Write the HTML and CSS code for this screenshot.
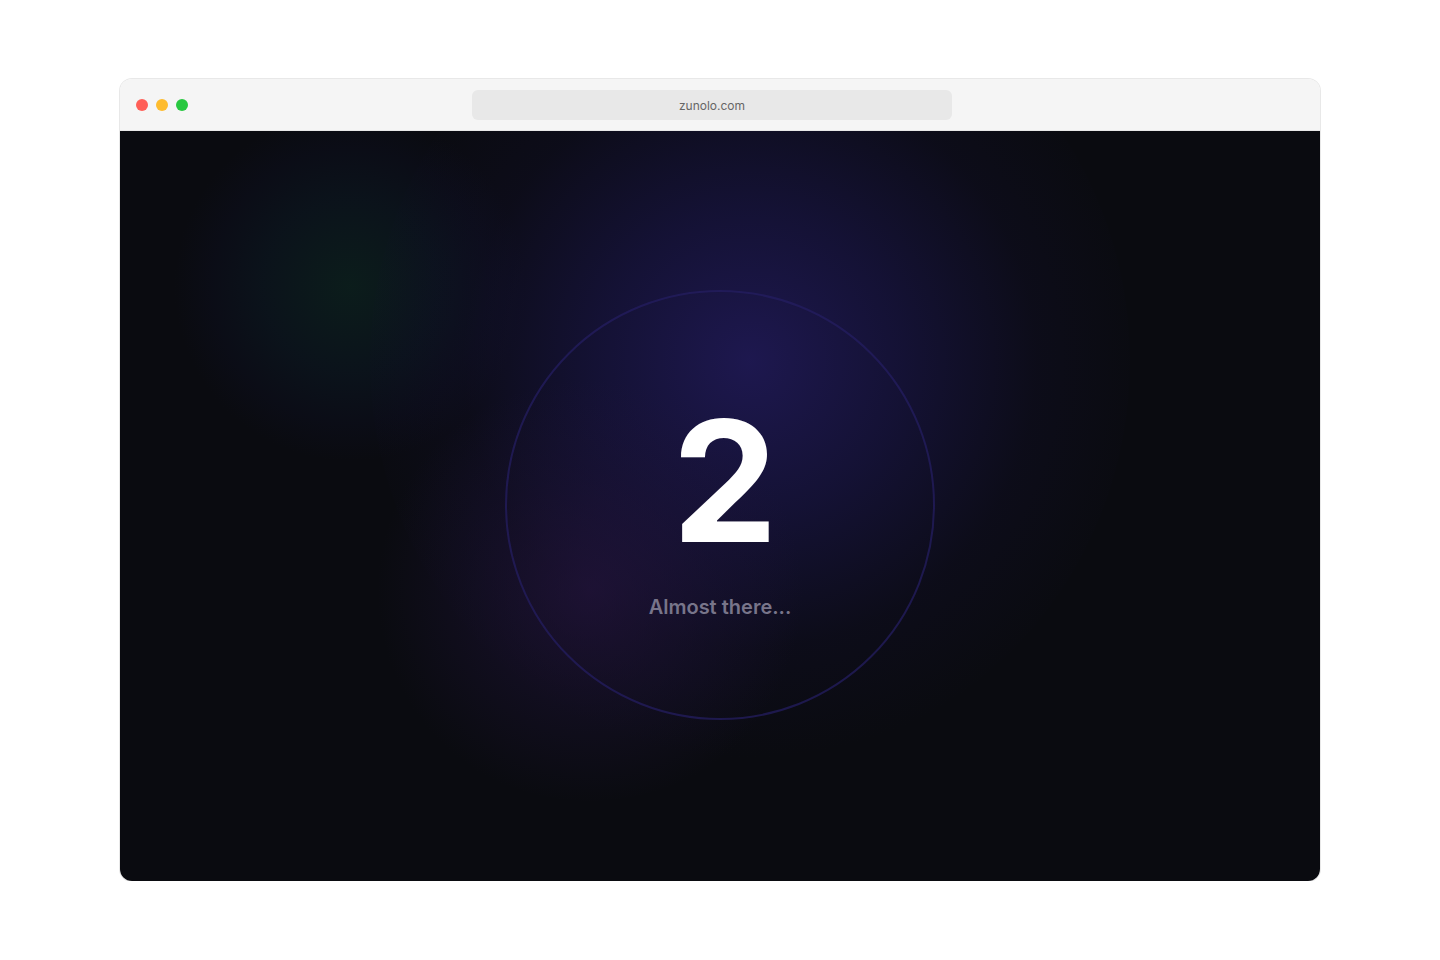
FILE: index.html
```html
<!DOCTYPE html>
<html lang="en">
<head>
    <meta charset="UTF-8">
    <meta name="viewport" content="width=device-width, initial-scale=1.0">
    <title>zunolo.com</title>
    <link rel="stylesheet" href="styles.css">
</head>
<body>
    <div class="window">
        <div class="titlebar">
            <div class="dots">
                <span class="dot red"></span>
                <span class="dot yellow"></span>
                <span class="dot green"></span>
            </div>
            <div class="address">zunolo.com</div>
        </div>
        <div class="screen">
            <div class="glow glow-green"></div>
            <div class="glow glow-indigo"></div>
            <div class="glow glow-violet"></div>
            <div class="ring">
                <div class="count">2</div>
                <div class="label">Almost there...</div>
            </div>
        </div>
    </div>
</body>
</html>
```

FILE: styles.css
```css
body {
    margin: 0;
    padding: 79px 120px 0;
    background: #ffffff;
    font-family: 'Inter', 'Liberation Sans', sans-serif;
}
.window {
    width: 1200px;
    height: 802px;
    border-radius: 12px;
    overflow: hidden;
    display: flex;
    flex-direction: column;
    box-shadow: 0 0 0 1px #e8e8e8;
}
.titlebar {
    height: 51px;
    flex: none;
    background: #f5f5f5;
    border-bottom: 1px solid #e8e8e8;
    display: flex;
    align-items: center;
    position: relative;
}
.dots {
    display: flex;
    gap: 8px;
    padding-left: 16px;
}
.dot {
    width: 12px;
    height: 12px;
    border-radius: 50%;
}
.red { background: #ff5f57; }
.yellow { background: #febc2e; }
.green { background: #28c840; }
.address {
    position: absolute;
    left: 352px;
    top: 11px;
    width: 480px;
    height: 30px;
    border-radius: 6px;
    background: #e8e8e8;
    color: #666;
    font-size: 12px;
    display: flex;
    align-items: center;
    justify-content: center;
}
.screen {
    flex: 1;
    background: #0a0b10;
    position: relative;
    overflow: hidden;
    display: flex;
    align-items: center;
    justify-content: center;
}
.glow {
    position: absolute;
    border-radius: 50%;
}
.glow-green {
    left: 50px;
    top: -20px;
    width: 360px;
    height: 350px;
    background: radial-gradient(circle, rgba(12, 36, 32, 0.7) 0%, rgba(12, 28, 40, 0.45) 35%, rgba(14, 18, 42, 0.25) 55%, rgba(10, 11, 16, 0) 70%);
}
.glow-indigo {
    left: 250px;
    top: -170px;
    width: 760px;
    height: 800px;
    background: radial-gradient(circle, rgba(36, 28, 100, 0.75) 0%, rgba(30, 24, 88, 0.5) 28%, rgba(20, 16, 52, 0.25) 52%, rgba(10, 11, 16, 0) 72%);
}
.glow-violet {
    left: 250px;
    top: 250px;
    width: 440px;
    height: 420px;
    background: radial-gradient(circle, rgba(42, 22, 72, 0.55) 0%, rgba(32, 20, 62, 0.3) 40%, rgba(10, 11, 16, 0) 70%);
}
.ring {
    position: relative;
    width: 426px;
    height: 426px;
    border: 2px solid rgba(36, 30, 96, 0.75);
    border-radius: 50%;
    margin-top: -2px;
    display: flex;
    flex-direction: column;
    align-items: center;
    justify-content: center;
}
.count {
    color: #ffffff;
    font-size: 168px;
    font-weight: 700;
    line-height: 1;
    margin-top: 6px;
    padding-left: 10px;
}
.label {
    margin-top: 30px;
    color: #78758a;
    font-size: 20px;
    font-weight: 600;
}
```
